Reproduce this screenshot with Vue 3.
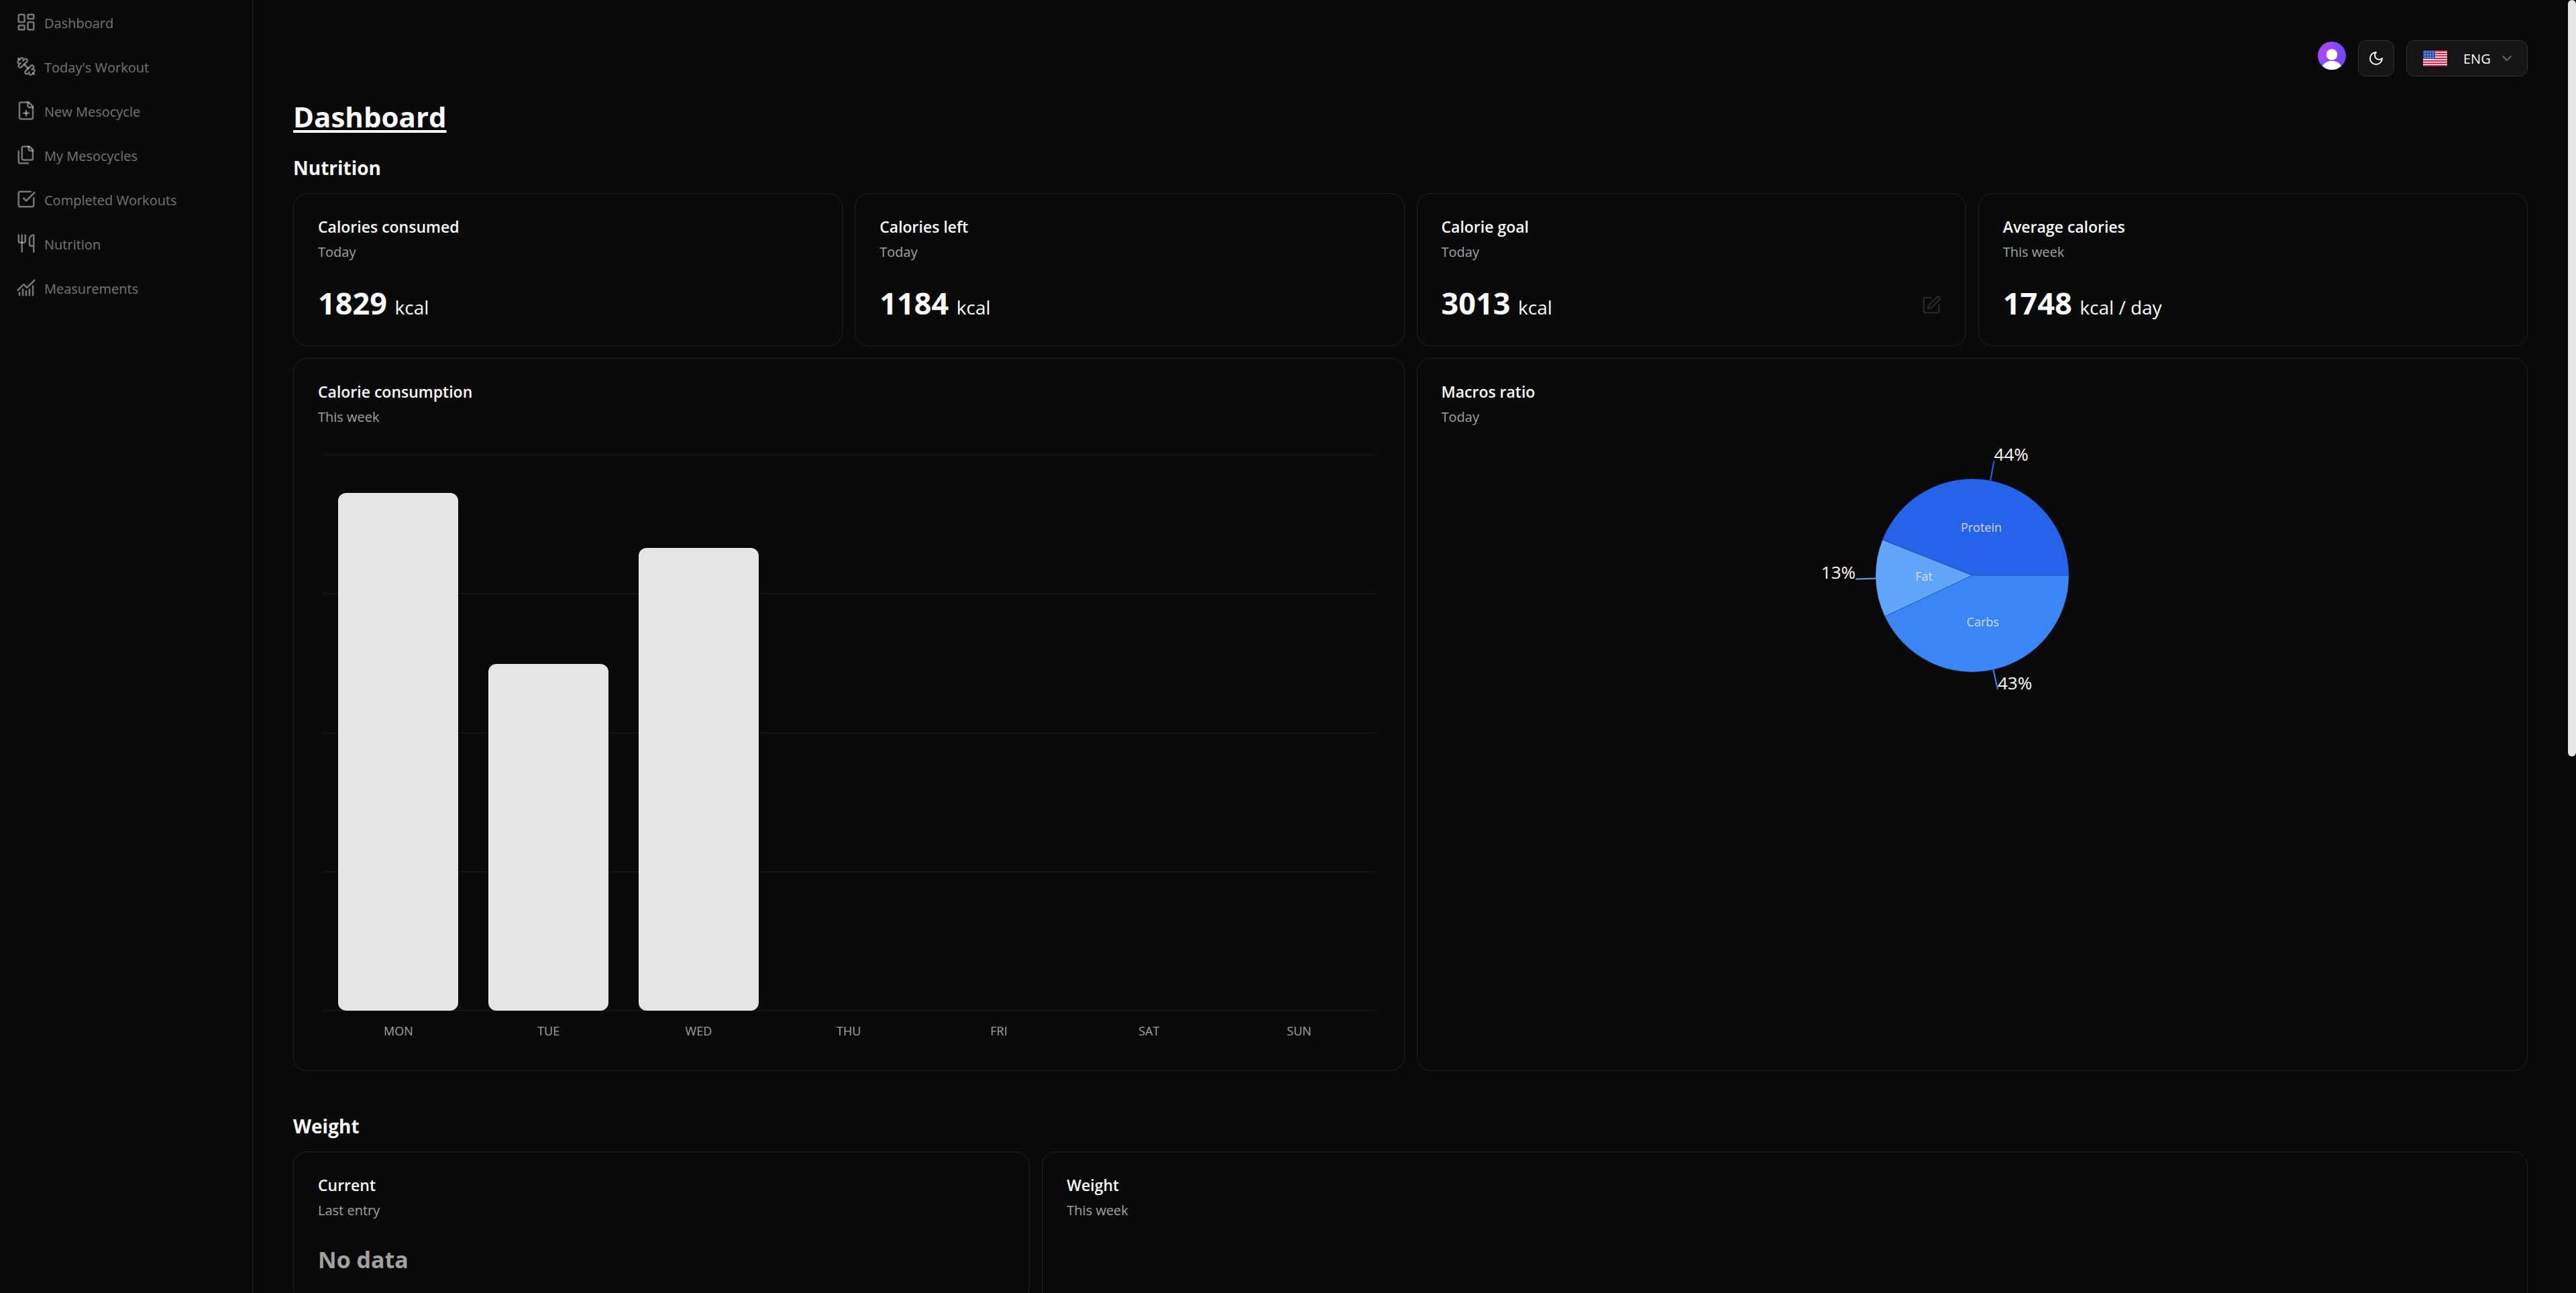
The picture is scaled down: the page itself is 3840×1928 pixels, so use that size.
<script setup>
import { ref } from 'vue'

const navItems = [
  {
    label: 'Dashboard',
    paths: [
      'M4 3h5a1 1 0 0 1 1 1v7a1 1 0 0 1-1 1H4a1 1 0 0 1-1-1V4a1 1 0 0 1 1-1z',
      'M15 3h5a1 1 0 0 1 1 1v3a1 1 0 0 1-1 1h-5a1 1 0 0 1-1-1V4a1 1 0 0 1 1-1z',
      'M15 12h5a1 1 0 0 1 1 1v7a1 1 0 0 1-1 1h-5a1 1 0 0 1-1-1v-7a1 1 0 0 1 1-1z',
      'M4 16h5a1 1 0 0 1 1 1v3a1 1 0 0 1-1 1H4a1 1 0 0 1-1-1v-3a1 1 0 0 1 1-1z',
    ],
  },
  {
    label: "Today's Workout",
    paths: [
      'M14.4 14.4 9.6 9.6',
      'M18.657 21.485a2 2 0 1 1-2.829-2.828l-1.767 1.768a2 2 0 1 1-2.829-2.829l6.364-6.364a2 2 0 1 1 2.829 2.829l-1.768 1.767a2 2 0 1 1 2.828 2.829z',
      'm21.5 21.5-1.4-1.4',
      'M3.9 3.9 2.5 2.5',
      'M6.404 12.768a2 2 0 1 1-2.829-2.829l1.768-1.767a2 2 0 1 1-2.828-2.829l2.828-2.828a2 2 0 1 1 2.829 2.828l1.767-1.768a2 2 0 1 1 2.829 2.829z',
    ],
  },
  {
    label: 'New Mesocycle',
    paths: [
      'M15 2H6a2 2 0 0 0-2 2v16a2 2 0 0 0 2 2h12a2 2 0 0 0 2-2V7Z',
      'M14 2v4a2 2 0 0 0 2 2h4',
      'M9 15h6',
      'M12 18v-6',
    ],
  },
  {
    label: 'My Mesocycles',
    paths: [
      'M20 7h-3a2 2 0 0 1-2-2V2',
      'M9 18a2 2 0 0 1-2-2V4a2 2 0 0 1 2-2h7l4 4v10a2 2 0 0 1-2 2Z',
      'M3 7.6v12.8A1.6 1.6 0 0 0 4.6 22h9.8',
    ],
  },
  {
    label: 'Completed Workouts',
    paths: [
      'M21 10.5V19a2 2 0 0 1-2 2H5a2 2 0 0 1-2-2V5a2 2 0 0 1 2-2h12.5',
      'm9 11 3 3L22 4',
    ],
  },
  {
    label: 'Nutrition',
    paths: [
      'M3 2v7c0 1.1.9 2 2 2h4a2 2 0 0 0 2-2V2',
      'M7 2v20',
      'M21 15V2a5 5 0 0 0-5 5v6c0 1.1.9 2 2 2h3Zm0 0v7',
    ],
  },
  {
    label: 'Measurements',
    paths: [
      'M12 16v5',
      'M16 14v7',
      'M20 10v11',
      'm22 3-8.646 8.646a.5.5 0 0 1-.708 0L9.354 8.354a.5.5 0 0 0-.707 0L2 15',
      'M4 18v3',
      'M8 14v7',
    ],
  },
]

const stats = [
  { title: 'Calories consumed', period: 'Today', value: 1829, unit: 'kcal' },
  { title: 'Calories left', period: 'Today', value: 1184, unit: 'kcal' },
  { title: 'Calorie goal', period: 'Today', value: 3013, unit: 'kcal', editable: true },
  { title: 'Average calories', period: 'This week', value: 1748, unit: 'kcal / day' },
]

const maxCalories = 2200
const week = [
  { day: 'MON', calories: 2045 },
  { day: 'TUE', calories: 1370 },
  { day: 'WED', calories: 1829 },
  { day: 'THU', calories: 0 },
  { day: 'FRI', calories: 0 },
  { day: 'SAT', calories: 0 },
  { day: 'SUN', calories: 0 },
]

const pie = { width: 560, height: 375, cx: 280, cy: 187, r: 144, tick: 30 }
const macros = [
  { name: 'Protein', share: 44, color: '#2563eb' },
  { name: 'Fat', share: 13, color: '#60a5fa' },
  { name: 'Carbs', share: 43, color: '#3b86f7' },
]

// Angles run counter-clockwise, starting at three o'clock.
function point(deg, radius) {
  const rad = (deg * Math.PI) / 180
  return {
    x: +(pie.cx + radius * Math.cos(rad)).toFixed(2),
    y: +(pie.cy - radius * Math.sin(rad)).toFixed(2),
  }
}

let start = 0
const slices = macros.map((macro) => {
  const end = start + macro.share * 3.6
  const mid = (start + end) / 2
  const a = point(start, pie.r)
  const b = point(end, pie.r)
  const slice = {
    ...macro,
    d: `M${pie.cx} ${pie.cy}L${a.x} ${a.y}A${pie.r} ${pie.r} 0 0 0 ${b.x} ${b.y}Z`,
    label: point(mid, pie.r / 2),
    from: point(mid, pie.r),
    to: point(mid, pie.r + pie.tick),
  }
  slice.anchor = slice.to.x > pie.cx ? 'start' : 'end'
  start = end
  return slice
})

const language = ref('ENG')
</script>

<template>
  <div class="shell">
    <aside class="sidebar">
      <nav aria-label="Main">
        <a v-for="item in navItems" :key="item.label" href="#" class="nav-link">
          <svg class="icon" viewBox="0 0 24 24" aria-hidden="true">
            <path v-for="d in item.paths" :key="d" :d="d" />
          </svg>
          <span>{{ item.label }}</span>
        </a>
      </nav>
    </aside>

    <main class="content">
      <header class="toolbar">
        <button type="button" class="avatar" aria-label="Account">
          <svg viewBox="0 0 42 42" aria-hidden="true">
            <defs>
              <linearGradient id="avatar-base" x1="0" y1="0" x2="1" y2="0">
                <stop offset="0.35" stop-color="#a347ff" />
                <stop offset="0.85" stop-color="#7448ff" />
              </linearGradient>
              <radialGradient id="avatar-glow" cx="0.2" cy="1" r="0.45">
                <stop offset="0" stop-color="#3f6bff" />
                <stop offset="1" stop-color="#3f6bff" stop-opacity="0" />
              </radialGradient>
              <clipPath id="avatar-clip"><circle cx="21" cy="21" r="21" /></clipPath>
            </defs>
            <g clip-path="url(#avatar-clip)">
              <rect width="42" height="42" fill="url(#avatar-base)" />
              <rect width="42" height="42" fill="url(#avatar-glow)" />
              <circle cx="21" cy="19.4" r="8.2" fill="#fff" />
              <circle cx="21" cy="46" r="17.2" fill="#fff" />
            </g>
          </svg>
        </button>

        <button type="button" class="theme" aria-label="Toggle theme">
          <svg class="icon icon-small" viewBox="0 0 24 24" aria-hidden="true">
            <path d="M12 3a6 6 0 0 0 9 9 9 9 0 1 1-9-9Z" />
          </svg>
        </button>

        <div class="language">
          <svg class="flag" viewBox="0 0 36 24" aria-hidden="true">
            <defs><clipPath id="flag-clip"><rect width="36" height="24" rx="3" /></clipPath></defs>
            <g clip-path="url(#flag-clip)">
              <rect width="36" height="24" fill="#fff" />
              <rect v-for="n in 7" :key="n" :y="((n - 1) * 48) / 13" width="36" :height="24 / 13" fill="#d80027" />
              <rect width="18" height="12.92" fill="#2e52b2" />
              <g fill="#c3cdea">
                <template v-for="row in 3" :key="row">
                  <circle v-for="col in 4" :key="col" :cx="col * 4 - 1" :cy="row * 4 - 1.4" r="0.9" />
                </template>
              </g>
            </g>
          </svg>
          <select v-model="language" class="language-select" aria-label="Language">
            <option>ENG</option>
            <option>PL</option>
          </select>
          <svg class="icon icon-small chevron" viewBox="0 0 24 24" aria-hidden="true">
            <path d="m6 9 6 6 6-6" />
          </svg>
        </div>
      </header>

      <h1>Dashboard</h1>

      <section class="section">
        <h2>Nutrition</h2>
        <div class="grid">
          <article v-for="stat in stats" :key="stat.title" class="card span-3">
            <div class="card-head">
              <h3>{{ stat.title }}</h3>
              <p>{{ stat.period }}</p>
            </div>
            <div class="stat">
              <p class="amount">{{ stat.value }} <span class="unit">{{ stat.unit }}</span></p>
              <button v-if="stat.editable" type="button" class="edit" aria-label="Edit calorie goal">
                <svg class="icon" viewBox="0 0 24 24" aria-hidden="true">
                  <path d="M12 3H5a2 2 0 0 0-2 2v14a2 2 0 0 0 2 2h14a2 2 0 0 0 2-2v-7" />
                  <path d="M18.375 2.625a1 1 0 0 1 3 3l-9.013 9.014a2 2 0 0 1-.853.505l-2.873.84a.5.5 0 0 1-.62-.62l.84-2.873a2 2 0 0 1 .506-.852z" />
                </svg>
              </button>
            </div>
          </article>

          <article class="card span-6">
            <div class="card-head">
              <h3>Calorie consumption</h3>
              <p>This week</p>
            </div>
            <div class="bar-chart">
              <div class="plot">
                <div class="rules"><i v-for="n in 5" :key="n"></i></div>
                <div class="bars">
                  <div v-for="entry in week" :key="entry.day" class="slot">
                    <div class="bar" :style="{ height: (entry.calories / maxCalories) * 100 + '%' }"></div>
                  </div>
                </div>
              </div>
              <div class="days">
                <span v-for="entry in week" :key="entry.day">{{ entry.day }}</span>
              </div>
            </div>
          </article>

          <article class="card span-6">
            <div class="card-head">
              <h3>Macros ratio</h3>
              <p>Today</p>
            </div>
            <svg class="pie" :viewBox="`0 0 ${pie.width} ${pie.height}`" role="img" aria-label="Macros ratio">
              <path v-for="s in slices" :key="s.name" :d="s.d" :fill="s.color" class="slice" />
              <g v-for="s in slices" :key="s.name">
                <line :x1="s.from.x" :y1="s.from.y" :x2="s.to.x" :y2="s.to.y" :stroke="s.color" stroke-width="2" />
                <text class="share" :x="s.to.x" :y="s.to.y" :text-anchor="s.anchor">{{ s.share }}%</text>
                <text class="macro" :x="s.label.x" :y="s.label.y" dy="6" text-anchor="middle">{{ s.name }}</text>
              </g>
            </svg>
          </article>
        </div>
      </section>

      <section class="section">
        <h2>Weight</h2>
        <div class="grid">
          <article class="card span-4">
            <div class="card-head">
              <h3>Current</h3>
              <p>Last entry</p>
            </div>
            <p class="empty">No data</p>
          </article>
          <article class="card span-8 tall">
            <div class="card-head">
              <h3>Weight</h3>
              <p>This week</p>
            </div>
          </article>
        </div>
      </section>
    </main>

    <div class="scrollbar" aria-hidden="true"><div class="thumb"></div></div>
  </div>
</template>

<style>
body {
  background: #0a0a0a;
}
</style>

<style scoped>
.shell {
  display: flex;
  height: 100vh;
  overflow: hidden;
  background: #0a0a0a;
  color: #fafafa;
  font-family: "Segoe UI", "Open Sans", "Noto Sans", sans-serif;
  font-size: 20px;
  line-height: 30px;
}

h1,
h2,
h3,
p {
  margin: 0;
}

button,
select {
  margin: 0;
  padding: 0;
  border: 0;
  background: none;
  color: inherit;
  font: inherit;
}

svg {
  display: block;
}

.icon {
  width: 30px;
  height: 30px;
  flex: none;
  fill: none;
  stroke: currentColor;
  stroke-width: 2;
  stroke-linecap: round;
  stroke-linejoin: round;
}

.icon-small {
  width: 24px;
  height: 24px;
}

.sidebar {
  width: 376px;
  flex: none;
  border-right: 1px solid #262626;
}

.nav-link {
  display: flex;
  align-items: center;
  gap: 12px;
  height: 66px;
  padding: 0 24px;
  color: rgba(250, 250, 250, 0.45);
  text-decoration: none;
}

.nav-link span {
  padding-top: 3px;
}

.content {
  flex: 1;
  min-width: 0;
  padding: 60px;
  overflow-y: auto;
  scrollbar-width: none;
}

.toolbar {
  display: flex;
  justify-content: flex-end;
  align-items: flex-start;
  gap: 18px;
  height: 54px;
}

.avatar {
  width: 42px;
  padding: 2px 0;
}

.theme,
.language {
  display: flex;
  align-items: center;
  box-sizing: border-box;
  height: 54px;
  border: 1px solid #333;
  border-radius: 12px;
  background: #151515;
}

.theme {
  justify-content: center;
  width: 54px;
}

.language {
  padding: 0 18px 0 24px;
}

.flag {
  width: 36px;
  height: 24px;
  margin-right: 24px;
}

.language-select {
  width: 53px;
  padding-top: 2px;
  appearance: none;
}

.language-select option {
  background: #151515;
}

.chevron {
  color: #666;
}

h1 {
  margin-top: 30px;
  font-size: 42px;
  font-weight: 700;
  line-height: 60px;
  text-decoration: underline;
  text-decoration-thickness: 4px;
  text-underline-offset: 4px;
}

h2 {
  margin-bottom: 16px;
  font-size: 28px;
  font-weight: 700;
  line-height: 44px;
}

.section {
  margin-top: 24px;
}

.section + .section {
  margin-top: 60px;
}

.grid {
  display: grid;
  grid-template-columns: repeat(12, minmax(0, 1fr));
  align-items: start;
  gap: 18px;
}

.card {
  align-self: stretch;
  box-sizing: border-box;
  padding: 36px;
  border: 1px solid #222;
  border-radius: 21px;
}

.span-3 {
  grid-column: span 3;
}

.span-4 {
  grid-column: span 4;
  align-self: start;
}

.span-6 {
  grid-column: span 6;
}

.span-8 {
  grid-column: span 8;
}

.tall {
  min-height: 1063px;
}

.card-head {
  display: flex;
  flex-direction: column;
  gap: 10px;
  margin-bottom: 34px;
}

.card-head p {
  color: #a1a1a1;
}

h3 {
  font-size: 23px;
  font-weight: 600;
  line-height: 26px;
}

.stat {
  display: flex;
  justify-content: space-between;
  align-items: flex-end;
}

.amount {
  font-size: 45px;
  font-weight: 700;
  line-height: 54px;
}

.unit {
  font-size: 28px;
  font-weight: 400;
  line-height: 28px;
}

.edit {
  padding-bottom: 9px;
  color: #262626;
}

.empty {
  color: #a1a1a1;
  font-size: 34px;
  font-weight: 700;
  line-height: 48px;
}

.bar-chart {
  padding: 6px 8px 11px;
}

.plot {
  position: relative;
  height: 830px;
}

.rules {
  position: absolute;
  inset: 0 0 -1px;
  display: flex;
  flex-direction: column;
  justify-content: space-between;
}

.rules i {
  height: 2px;
  background: #151515;
}

.bars,
.days {
  display: grid;
  grid-template-columns: repeat(7, 1fr);
}

.bars {
  position: relative;
  height: 100%;
}

.slot {
  display: flex;
  align-items: flex-end;
  justify-content: center;
}

.bar {
  width: 80%;
  border-radius: 12px;
  background: #e5e5e5;
}

.days {
  margin-top: 18px;
  color: #a1a1a1;
  font-size: 18px;
  line-height: 24px;
  text-align: center;
}

.pie {
  width: 560px;
  max-width: 100%;
  height: 375px;
  margin: 0 auto;
  overflow: visible;
}

.slice {
  stroke: rgba(10, 10, 10, 0.2);
  stroke-width: 1;
}

.share {
  fill: #fafafa;
  font-size: 26px;
}

.macro {
  fill: #e5e5e5;
  fill-opacity: 0.9;
  font-size: 18px;
}

.scrollbar {
  width: 12px;
  flex: none;
}

.thumb {
  height: 58.5%;
  border-radius: 6px;
  background: #e5e5e5;
}
</style>
